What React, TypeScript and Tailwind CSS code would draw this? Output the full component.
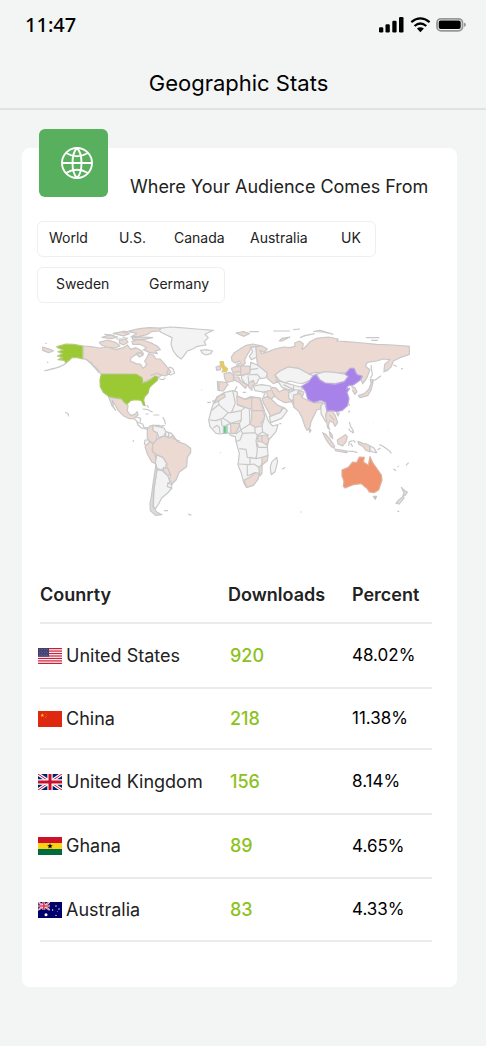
import React from "react";

const LAND = "#ebd9d2";
const PLAIN = "#f3f3f3";
const EDGE = "#c9c8c8";

type Shape = { d: string; fill?: string; line?: string };

function Region({ x, y, shapes }: { x: number; y: number; shapes: Shape[] }) {
  return (
    <g transform={`translate(${x} ${y}) scale(0.33333)`}>
      {shapes.map((s, i) => (
        <path key={i} d={s.d} fill={s.fill ?? PLAIN} stroke={s.line ?? EDGE} strokeWidth={3.6} strokeLinejoin="round" />
      ))}
    </g>
  );
}

const northAmerica: Shape[] = [
  { d: "M20 96L45 104 52 108 38 113 20 106Z", fill: LAND },
  { d: "M94 141C78 158 55 160 25 167M88 292l8 4 2 8M33 142h4M28 85h4", fill: "none" },
  { d: "M141 93L165 95 190 99 215 96 240 104 262 98 274 90 284 103 300 98 318 108 322 116 302 118 285 128 283 138 300 146 314 148 320 160 326 156 332 148 326 138 333 128 338 116 352 120 360 132 372 132 385 146 394 158 405 170 398 178 388 183 376 180 366 190 358 184 345 192 330 198 318 206 320 195 305 182 280 178 195 177 184 162 168 148 152 134 141 131Z", fill: LAND },
  { d: "M190 82L215 75 238 82 252 92 238 99 212 96 196 90ZM198 67L220 60 245 66 226 71ZM250 76L270 72 276 82 262 90 250 84ZM288 80L305 74 330 78 350 86 365 94 373 104 358 108 364 116 340 112 322 104 332 98 312 88 290 88ZM232 55L260 50 280 56 262 63ZM278 48L310 41 340 38 390 40 370 48 345 50 335 58 310 64 285 65 302 56ZM288 68L325 66 350 68 325 73 290 74ZM300 116l12 -4 10 8 -12 6Z", fill: LAND },
  { d: "M150 133L165 145 178 160 190 174M164 140l8 14 14 14M260 48l30 4M205 58l30 3M344 182l20-8 14 8M240 72l20 0M260 68l16 2M368 192l14 2 6-6M392 176l12 4 12-6-6-14-10-4Z", fill: "none" },
  { d: "M62 95L90 87 114 88 140 93 140 132 124 128 108 128 100 136 90 143 84 136 66 134 80 128 64 123 80 116 66 110 82 105 66 99Z", fill: "#9ac934", line: "#b8cc80" },
  { d: "M218 246L238 250 256 252 268 264 276 271 274 288 284 301 296 298 304 290 306 300 294 311 280 311 262 302 246 286 236 268 229 256 232 275 239 286 228 272Z", fill: LAND },
  { d: "M196 178L300 178 318 188 320 206 335 200 348 192 357 184 364 186 364 196 350 208 340 218 336 234 325 246 323 256 327 272 322 270 316 256 300 254 285 256 273 267 266 262 256 250 240 248 218 244 202 232 193 215 192 195Z", fill: "#9ac934", line: "#a8c860" },
  { d: "M320 282L336 284 350 292M352 300h18M328 297h10M332 270l6 8M294 311L302 318 306 330 318 340 334 338 338 346M300 306L314 310 312 322M380 306l6 10 2 12M378 332h8", fill: "none" },
];

const southAmerica: Shape[] = [
  { d: "M172 88L180 78 188 76 190 92 202 98 200 118 190 132 178 122 172 116Z", fill: LAND },
  { d: "M188 76L205 80 222 84 228 95 222 108 206 112 202 98 190 92Z" },
  { d: "M228 95L245 100 250 110 240 113 226 108ZM236 98v14" },
  { d: "M165 120L176 120 179 128 170 138 163 132Z" },
  { d: "M165 140L180 125 190 132 186 150 196 165 198 192 185 185 172 162Z", fill: LAND },
  { d: "M188 134L200 118 222 108 240 114 250 106 262 125 285 132 302 145 302 158 292 172 290 200 268 216 258 240 246 252 238 240 242 225 232 205 230 190 218 172 202 164 188 156Z", fill: LAND },
  { d: "M200 165L218 172 230 190 226 202 214 210 202 206 196 190Z" },
  { d: "M220 203L234 205 241 225 232 227 220 212Z", fill: LAND },
  { d: "M201 209L216 212 234 228 240 246 234 256 246 264 232 280 215 294 206 312 196 326 190 320 192 270Z" },
  { d: "M234 248l12 6-4 10-10-4Z" },
  { d: "M198 192L201 210 191 270 189 320 200 336 216 344 196 346 181 332 180 310 184 290 190 245Z", fill: "#dcdcdc" },
  { d: "M222 332l12 0M294 342l10 4M130 121v5M140 66l18 6 6 14 10 2M190 76l16 0 12 4M246 114l24 10", fill: "none" },
];

const europeRussia: Shape[] = [
  { d: "M0 40L30 36 60 38 110 42 160 46 135 58 145 68 133 80 138 90 112 94 98 102 82 108 72 122 64 132 52 124 40 108 33 88 36 68 15 58 0 50Z" },
  { d: "M122 106L140 104 158 108 152 116 138 120 126 114Z" },
  { d: "M228 54L250 50 268 56 252 64ZM268 50h28M340 48h50M400 44l20-2M420 68l14-6 30-6M460 50l20-4 40 12M618 68h40M634 76h20M358 78L366 70 390 66 366 78Z", fill: LAND },
  { d: "M214 126L222 114 240 102 256 92 278 87 300 92 288 98 272 96 270 106 260 122 254 134 256 145 246 152 238 138 226 144 216 138Z", fill: LAND },
  { d: "M272 97L288 95 291 126 274 134 268 124 278 110Z" },
  { d: "M288 96L305 92 322 102 312 112 300 106 305 116 325 110 345 102 370 96 390 98 405 94 404 84 418 78 430 86 426 104 438 94 450 80 470 70 505 66 535 72 530 78 560 80 610 84 650 88 700 90 748 94 748 118 720 128 700 138 694 155 680 168 672 165 674 148 690 134 670 132 650 138 622 142 616 154 630 164 620 190 608 206 602 190 590 180 578 160 560 172 520 176 465 172 445 178 415 160 385 156 360 168 345 180 354 200 340 206 322 190 318 172 294 158 290 130Z", fill: LAND },
  { d: "M345 180L360 168 385 156 415 160 448 178 462 182 450 196 428 205 412 204 390 198 372 204 358 196Z" },
  { d: "M192 176L210 172 222 182 220 198 200 202 194 190Z", fill: LAND },
  { d: "M172 200L198 202 204 208 190 228 174 226ZM177 203v22", fill: LAND },
  { d: "M214 160L235 152 272 154 270 174 244 182 222 180ZM242 153v28M222 172l20-4", fill: LAND },
  { d: "M272 142L292 150 322 174 318 188 296 192 290 206 268 212 255 205 244 190 246 182 270 174ZM272 164l22-4M262 180l30-2 10 12M264 184l4 26" },
  { d: "M220 186L236 186 240 196 255 206 262 212 256 220 240 204 224 196Z", fill: LAND },
  { d: "M266 204L280 196 284 206 276 214 276 226 266 216Z", fill: LAND },
  { d: "M168 156L180 152 182 164 170 166Z", fill: LAND },
  { d: "M180 140L190 140 192 152 203 162 200 169 186 171 190 163 182 152Z", fill: "#ecc94f", line: "#d8c98c" },
  { d: "M228 156l4-10 6 0-4 12M222 234l6-16M230 214v6M248 232h10", fill: "none" },
];

const asia: Shape[] = [
  { d: "M94 178L118 170 150 172 184 178 190 184 178 200 150 206 120 204 105 194Z" },
  { d: "M25 240L45 235 52 248 72 258 90 264 112 262 106 282 95 285 86 304 78 320 74 340 66 346 60 335 52 310 42 290 26 276Z", fill: LAND },
  { d: "M70 256L90 262 110 262M72 340l6 6-4 6Z" },
  { d: "M108 272L118 262 126 288 122 300 128 318 122 320 108 296Z" },
  { d: "M126 290L142 288 150 300 158 322 150 334 144 322 134 318 130 332 134 344 128 338 122 304ZM134 300l14 16", fill: LAND },
  { d: "M50 214L70 202 82 186 92 178 105 196 120 204 150 208 178 200 190 184 180 178 195 160 207 160 215 178 232 184 225 196 205 210 190 212 184 222 194 220 186 232 192 250 188 272 172 286 155 290 140 286 126 288 122 262 108 256 85 262 68 252 62 230Z", fill: "#a782e8", line: "#bba6e0" },
  { d: "M220 242L238 236 252 222 258 205 264 202 258 225 248 242 225 248ZM256 193l12 2-10 8ZM198 212l12 6 6 12-6 8-8-12M190 264l4 8", fill: LAND },
  { d: "M258 150L262 180 256 190M270 196l18-14M295 172l8-6M325 150l10 4M348 160l6 2M155 293l8 2-4 8Z", fill: "none" },
];

const africa: Shape[] = [
  { d: "M52 80L72 68 98 62 112 66 112 78 135 88 150 80 180 84 186 100 196 130 206 155 218 168 234 164 228 185 206 210 202 230 204 255 186 280 184 300 174 325 160 345 140 352 132 340 124 310 114 285 118 250 108 215 106 200 92 196 85 188 60 192 48 190 30 170 26 150 34 120 40 100Z" },
  { d: "M54 80L72 70 76 80 56 92 42 100Z", fill: LAND },
  { d: "M110 78L135 88 155 83 155 118 135 112 112 104Z", fill: LAND },
  { d: "M155 82L180 84 184 100 190 122 155 122Z", fill: LAND },
  { d: "M155 122L190 122 194 138 186 168 165 172 150 162 155 145Z", fill: LAND },
  { d: "M92 160L118 160 118 170 106 190 92 190Z", fill: LAND },
  { d: "M172 198L202 195 206 212 200 225 186 216 174 214ZM186 196v20", fill: LAND },
  { d: "M186 262L204 256 202 272 186 285 186 310 180 318 176 292 186 284Z", fill: LAND },
  { d: "M132 330L150 322 165 308 178 310 174 328 160 346 140 352Z", fill: LAND },
  { d: "M34 122L56 104 84 128 68 145 48 152 28 150M56 92L56 104M98 62L106 100 94 128 84 128M94 128L124 122 124 150 92 160 78 150 68 145M112 104L135 112M124 122L135 112M124 150L118 160 122 180 108 192M148 118L150 162 122 180 128 190 165 188 165 172M186 168L188 186 172 196 165 188M188 186L206 196M128 190L120 210 108 215M118 236L138 238 142 262 168 266 172 240 168 212 172 198M168 212L176 232 202 232M114 282L150 284 150 262M150 284L162 282 176 292M142 286L142 318M150 262L168 266 186 262M142 318L165 308M50 166L58 172 60 190M64 150L66 168M78 166L92 160M40 174l12-8M194 148L180 160M82 164v24", fill: "none" },
  { d: "M212 306L211 290 216 275 230 262 233 275 225 305 214 314Z" },
  { d: "M186 85L200 80 215 88 232 105 248 112 240 128 212 140 205 125 192 102Z", fill: LAND },
  { d: "M208 140L240 128 252 112 262 122 245 145 212 158Z" },
  { d: "M200 64L218 52 228 54 238 66 252 58 268 62 268 80 275 95 255 98 235 88 224 78 215 86 202 78ZM216 62l8 16", fill: LAND },
  { d: "M160 48L185 44 212 48 214 60 190 66 165 62ZM184 66l12 2-6 14" },
  { d: "M228 32L242 34 262 40 290 48 308 52 305 60 285 62 262 58 246 52 238 40ZM250 44l30 14M280 48l2 12" },
  { d: "M266 68L285 60 296 60 290 80 275 92 266 85Z" },
  { d: "M275 94L290 82 298 62 312 66 306 84 294 108 280 106Z", fill: LAND },
  { d: "M22 97h10M36 94l6-2M238 161h6M246 298l10-6M60 248h2M4 60h2", fill: "none" },
  { d: "M70 168h9v22h-9Z", fill: "#63c888", line: "#a5d5b5" },
];

const oceania: Shape[] = [
  { d: "M68 98L76 102 90 118 104 138 102 144 94 140 80 122ZM104 147L124 150 144 154 140 158 108 153ZM112 120L125 112 136 104 142 110 138 125 128 138 114 132ZM88 94l8 10 2 12-8-8Z", fill: LAND },
  { d: "M174 124L188 130 200 132 210 138 210 156 196 150 190 140 176 132Z", fill: LAND },
  { d: "M210 138L222 144 230 158 218 156 210 152Z" },
  { d: "M146 126L158 122M148 124l-2 14M152 130l6 10M146 154h14l12 4M148 66l4 14 8 12-2 8M146 86l6 8M152 94l10 4M160 120l6 8M232 150l10-6M238 134l10 4 20 14 6 8M280 206l8 6M292 200l4-2M318 196l8-8M220 68v1M264 92v1M0 336h4M292 334h6M145 38l4-6", fill: "none" },
  { d: "M126 210L145 202 158 186 170 188 178 171 193 172 190 186 205 196 210 170 218 188 228 202 244 225 246 240 236 270 222 278 208 276 200 264 194 260 184 251 160 254 135 264 130 258 132 244 126 228Z", fill: "#f0926b", line: "#dcb09d" },
  { d: "M220 289l10 0-4 9Z", fill: "#dd8d70" },
  { d: "M304 262L314 272 322 276 316 286 308 290 312 278ZM308 290L312 294 298 312 288 310 294 302Z", fill: LAND },
];

function WorldMap() {
  return (
    <svg viewBox="36 315 384 210" className="block w-full" role="img" aria-label="World map">
      <Region x={36} y={315} shapes={northAmerica} />
      <Region x={90} y={400} shapes={southAmerica} />
      <Region x={160} y={315} shapes={europeRussia} />
      <Region x={200} y={370} shapes={africa} />
      <Region x={285} y={315} shapes={asia} />
      <Region x={300} y={400} shapes={oceania} />
    </svg>
  );
}

const STAR = "M0-5L1.2-1.6 4.8-1.6 1.9.6 3 4 0 1.9-3 4-1.9.6-4.8-1.6-1.2-1.6Z";

function UnionJack() {
  return (
    <>
      <path fill="#012169" d="M0 0h72v48H0z" />
      <path d="M0 0L72 48M72 0L0 48" stroke="#fff" strokeWidth="10" />
      <path d="M0 0L72 48M72 0L0 48" stroke="#c8102e" strokeWidth="3" />
      <path d="M36 0v48M0 24h72" stroke="#fff" strokeWidth="16" />
      <path d="M36 0v48M0 24h72" stroke="#c8102e" strokeWidth="9" />
    </>
  );
}

const flags: Record<string, React.ReactNode> = {
  us: (
    <>
      <path fill="#fff" d="M0 0h72v48H0z" />
      {[0, 1, 2, 3, 4, 5, 6].map((i) => (
        <rect key={i} y={i * 7.38} width="72" height="3.69" fill="#c8203a" />
      ))}
      <path fill="#3c3b6e" d="M0 0h33v26H0z" />
      <path d="M3 4h28M5 9h26M3 14h28M5 19h26M3 23h28" stroke="#a9a9cc" strokeWidth="1.6" strokeDasharray="2 3" />
    </>
  ),
  cn: (
    <>
      <path fill="#de2910" d="M0 0h72v48H0z" />
      <path fill="#ffde00" transform="translate(13 13) scale(1.2)" d={STAR} />
      <path fill="#f08a10" d="M22 5h2v2h-2zM25 10h2v2h-2zM25 15h2v2h-2zM21 19h2v2h-2z" />
    </>
  ),
  gb: <UnionJack />,
  gh: (
    <>
      <path fill="#ce1126" d="M0 0h72v18H0z" />
      <path fill="#fcd116" d="M0 18h72v18H0z" />
      <path fill="#006b3f" d="M0 36h72v18H0z" />
      <path fill="#000" transform="translate(36 27.5) scale(1.8)" d={STAR} />
    </>
  ),
  au: (
    <>
      <path fill="#00006b" d="M0 0h72v48H0z" />
      <path d="M0 0L35 24M35 0L0 24" stroke="#fff" strokeWidth="5" />
      <path d="M0 0L35 24M35 0L0 24" stroke="#e2334a" strokeWidth="2" />
      <path d="M17.500 0v24M0 12h35" stroke="#fff" strokeWidth="8" />
      <path d="M17.500 0v24M0 12h35" stroke="#e2334a" strokeWidth="5" />
      <g fill="#fff">
        <circle cx="24" cy="38" r="4.500" />
        <circle cx="54" cy="12" r="2" />
        <circle cx="44" cy="24" r="2" />
        <circle cx="63" cy="21" r="2" />
        <circle cx="54" cy="40" r="2" />
        <circle cx="58" cy="28" r="1.300" />
      </g>
    </>
  ),
};

const rows = [
  { flag: "us", name: "United States", downloads: 920, percent: "48.02%", height: "h-[65px]" },
  { flag: "cn", name: "China", downloads: 218, percent: "11.38%", height: "h-[61px]" },
  { flag: "gb", name: "United Kingdom", downloads: 156, percent: "8.14%", height: "h-[65px]" },
  { flag: "gh", name: "Ghana", downloads: 89, percent: "4.65%", height: "h-[64px]" },
  { flag: "au", name: "Australia", downloads: 83, percent: "4.33%", height: "h-[63px]" },
];

export default function App() {
  return (
    <div className="min-h-screen bg-[#f3f5f4] pb-[59px] font-['Inter',sans-serif] text-[#222222]">
      <header className="border-b-2 border-[#e0e3e1] text-black">
        <div className="flex h-[50px] items-center justify-between pr-5 pl-[25px]">
          <time className="font-['Noto_Sans',sans-serif] text-xl font-medium">11:47</time>
          <svg viewBox="0 0 88 18" className="h-[18px] w-[88px]" aria-hidden="true">
            <rect x="1" y="11.300" width="4.300" height="5.200" rx="1.200" />
            <rect x="7.500" y="8.200" width="4.300" height="8.300" rx="1.200" />
            <rect x="14.300" y="4.700" width="4.300" height="11.800" rx="1.200" />
            <rect x="21" y="1" width="4.500" height="15.500" rx="1.200" />
            <g fill="none" stroke="#000" strokeWidth="2.200">
              <path d="M33.300 6.200Q42.300 -1.300 51.600 6.200" />
              <path d="M36.500 10Q42.300 5 48.300 10" />
            </g>
            <path d="M38.900 12.500Q42.300 9.800 45.900 12.500L42.400 16.300Z" />
            <rect x="59" y="2.800" width="25.500" height="12" rx="4" fill="none" stroke="#979997" strokeWidth="1.800" />
            <rect x="60.700" y="4.600" width="22" height="8.300" rx="2" />
            <path d="M86 6.600q2 .8 2 2.200t-2 2.200z" fill="#979997" />
          </svg>
        </div>
        <h1 className="pt-[17px] pr-[9px] pb-[9px] text-center text-[22px] leading-8 font-normal">Geographic Stats</h1>
      </header>

      <main className="mt-[38px] mr-[29px] ml-[22px] rounded-lg bg-white pb-[45px]">
        <div className="flex pl-[17px]">
          <div className="-mt-[19px] flex h-[68px] w-[69px] shrink-0 items-center justify-center rounded-md bg-[#58af5d] pl-1.5">
            <svg viewBox="0 0 32 32" className="size-8" fill="none" stroke="#fff" strokeWidth="1.900" aria-hidden="true">
              <circle cx="16" cy="16" r="15" />
              <path d="M1 16h30M16 1C10 7 10 25 16 31M16 1c6 6 6 24 0 30M5 6q11 6.500 22 0M5 26q11-6.500 22 0" />
            </svg>
          </div>
          <h2 className="pt-6 pl-[22px] text-lg leading-[30px] font-normal whitespace-nowrap">Where Your Audience Comes From</h2>
        </div>

        <nav aria-label="Countries" className="mt-[19px] flex flex-col items-start gap-2.5 pl-[15px] text-sm">
          <div className="grid h-9 grid-cols-[70px_55px_76px_91px_34px] items-center justify-items-start rounded-md border border-[#eeeff0] pb-0.5 pl-[11px]">
            <button type="button">World</button>
            <button type="button">U.S.</button>
            <button type="button">Canada</button>
            <button type="button">Australia</button>
            <button type="button">UK</button>
          </div>
          <div className="grid h-9 grid-cols-[93px_75px] items-center justify-items-start rounded-md border border-[#eeeff0] pb-0.5 pl-[18px]">
            <button type="button">Sweden</button>
            <button type="button">Germany</button>
          </div>
        </nav>

        <div className="mt-3 mr-[37px] ml-3.5">
          <WorldMap />
        </div>

        <table className="mt-[42px] mr-[25px] ml-[18px] w-[calc(100%-43px)] table-fixed border-collapse text-left text-lg">
          <colgroup>
            <col className="w-[188px]" />
            <col className="w-[124px]" />
            <col />
          </colgroup>
          <thead>
            <tr className="h-14 border-b-2 border-[#ebebeb] align-middle">
              <th scope="col" className="p-0 font-semibold">Counrty</th>
              <th scope="col" className="p-0 font-semibold">Downloads</th>
              <th scope="col" className="p-0 font-semibold">Percent</th>
            </tr>
          </thead>
          <tbody>
            {rows.map((r) => (
              <tr key={r.flag} className={`${r.height} border-b-2 border-[#ebebeb]`}>
                <td className="p-0">
                  <div className="-ml-0.5 flex items-center gap-1 whitespace-nowrap">
                    <svg viewBox={r.flag === "gh" ? "0 0 72 54" : "0 0 72 48"} className="w-6 shrink-0" aria-hidden="true">
                      {flags[r.flag]}
                    </svg>
                    {r.name}
                  </div>
                </td>
                <td className="p-0 pl-0.5 font-medium text-[#8cc220]">{r.downloads}</td>
                <td className="p-0 text-[17px] text-black">{r.percent}</td>
              </tr>
            ))}
          </tbody>
        </table>
      </main>
    </div>
  );
}
